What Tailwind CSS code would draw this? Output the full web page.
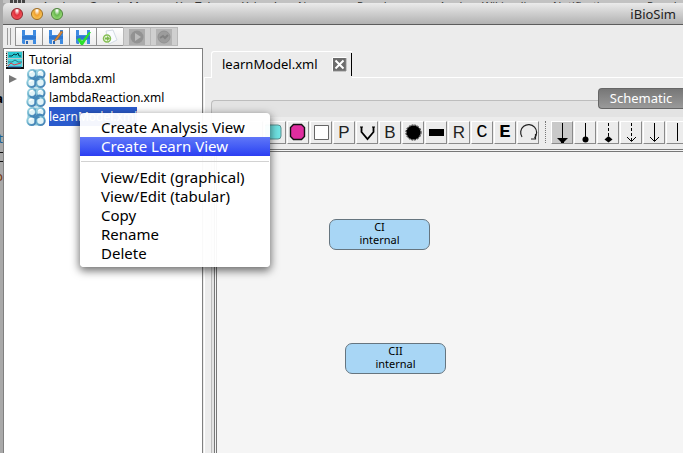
<!DOCTYPE html>
<html lang="en">
<head>
<meta charset="utf-8">
<title>iBioSim</title>
<script src="https://cdn.jsdelivr.net/npm/@tailwindcss/browser@4"></script>
</head>
<body class="h-screen overflow-hidden bg-[#a9a9a9] font-['Noto_Sans',sans-serif] text-black">
<svg class="absolute h-0 w-0">
  <defs>
    <linearGradient id="ball" x1="0" y1="0" x2="1" y2="1"><stop offset="0" stop-color="#a8dde8"/><stop offset=".5" stop-color="#62a9c8"/><stop offset="1" stop-color="#3d76b0"/></linearGradient>
    <symbol id="model" viewBox="0 0 20 19">
      <rect x="1.500" y=".5" width="17" height="18" rx="5" fill="#8cc6da"/>
      <g fill="#e2f4f8" stroke="url(#ball)" stroke-width="2">
        <circle cx="6" cy="5" r="4"/><circle cx="14.500" cy="5" r="4"/><circle cx="5.500" cy="13.800" r="4.200"/><circle cx="14.500" cy="13.800" r="4.200"/>
      </g>
      <path d="M4 8.500q4 3 7 0q3-2 6 .5M9.500 16q-1-6 4-6" fill="none" stroke="#4688b8" stroke-width="2"/>
      <path d="M4 4q1-2 3-1.500M12.500 4q1-2 3-1.500M3.500 13q1-2 3-1.500" fill="none" stroke="#fff" stroke-width="1.500"/>
    </symbol>
    <symbol id="floppy" viewBox="0 0 16 16">
      <path d="M1 1h14v14H2l-1-1z" fill="#3f8be0"/><path d="M4 1h8v5H4z" fill="#f2f7fd"/><path d="M1 7h14v3H1z" fill="#3078d0"/><path d="M4 11h8v4H4z" fill="#dfe3e8"/><path d="M5 12h2v3H5z" fill="#2a66b4"/>
    </symbol>
  </defs>
</svg>
<div class="relative flex h-full flex-col overflow-hidden pl-[3px]">
  <div aria-hidden="true" class="absolute top-0 left-0 h-full w-[3px] overflow-hidden text-right text-[13px] leading-5">
    <div class="flex h-full flex-col items-end pt-[88px]"><b>a</b><span class="mt-5 text-[#1c5d92]">t</span><span class="mt-1 h-[10px] w-full shrink-0 border-y border-[#111]"></span><span class="mt-1 text-[#7a3a10]">p</span></div>
  </div>
  <div class="relative h-[3px] shrink-0 overflow-hidden bg-[#c2c2c2] text-[11px] text-[#333]">
    <svg class="absolute top-0 left-[7px] h-[3px] w-[15px]" viewBox="0 0 15 3"><path d="M0 1.500h15" stroke="#444" stroke-width="3" stroke-dasharray="3 1"/></svg>
    <div class="absolute -top-[2px] left-[39px] flex leading-4 whitespace-nowrap"><span class="w-[47px]">Apple</span><span class="w-[87px]">Google Maps</span><span class="w-[66px]">YouTube</span><span class="w-[56px]">Yahoo!</span><span class="w-[59px]">News</span><span class="w-[82px]">Popular</span><span class="w-[43px]">Apple</span><span class="w-[71px]">Wikipedia</span><span class="w-[94px]">Notifications</span><span>Popular</span></div>
  </div>
  <header class="relative flex h-[22px] shrink-0 items-center gap-2 rounded-tl-[5px] border-b border-[#5c5c5c] bg-linear-to-b from-[#ebebeb] to-[#b2b2b2] pl-2">
    <button aria-label="Close" class="h-3 w-3 rounded-full border border-[#8d2228] bg-[radial-gradient(ellipse_at_50%_15%,#fff_5%,#e0303c_40%,#ff6a70_100%)]"></button>
    <button aria-label="Minimize" class="h-3 w-3 rounded-full border border-[#9c6a20] bg-[radial-gradient(ellipse_at_50%_15%,#fff_5%,#f0a030_40%,#ffe070_100%)]"></button>
    <button aria-label="Zoom" class="h-3 w-3 rounded-full border border-[#4a8038] bg-[radial-gradient(ellipse_at_50%_15%,#fff_5%,#68b850_40%,#b8f590_100%)]"></button>
    <h1 class="ml-auto pr-[7px] text-[13px] leading-5 text-[#222]">iBioSim</h1>
  </header>
  <div class="flex h-[23px] shrink-0 items-center bg-[#ececec] pl-1">
    <span class="mr-1 h-[17px] w-1 border-x border-[#9a9a9a]"></span>
    <button aria-label="Save" class="flex h-[19px] w-7 items-center justify-center border border-[#919191] bg-linear-to-b from-white to-[#ededed]"><svg class="h-4 w-4"><use href="#floppy"/></svg></button>
    <button aria-label="Save as" class="-ml-px flex h-[19px] w-7 items-center justify-center border border-[#919191] bg-linear-to-b from-white to-[#ededed]"><svg class="h-4 w-4" viewBox="0 0 16 16"><use href="#floppy"/><path d="M7 10L13 2l2 1-6 8-3 1z" fill="#d88a3a" stroke="#8a5525" stroke-width=".5"/></svg></button>
    <button aria-label="Save and check" class="-ml-px flex h-[19px] w-7 items-center justify-center border border-[#919191] bg-linear-to-b from-white to-[#ededed]"><svg class="h-4 w-4" viewBox="0 0 16 16"><use href="#floppy"/><path d="M2 10l3-1 2 3 7-9 2 0-8 13H6z" fill="#2be02b"/></svg></button>
    <button aria-label="Export" class="-ml-px flex h-[19px] w-7 items-center justify-center border border-[#919191] bg-linear-to-b from-white to-[#ededed]"><svg class="h-4 w-4" viewBox="0 0 16 16"><path d="M4 2l7-1 4 10-8 4z" fill="#fafcff" stroke="#d3dbe4"/><circle cx="5" cy="9.500" r="3.500" fill="#eef7e4" stroke="#86bf55" stroke-width="1.500"/><path d="M3 8.500h2V7l3 2.500L5 12v-1.500H3z" fill="#7cb84c"/></svg></button>
    <button aria-label="Run" disabled class="-ml-px flex h-[19px] w-7 items-center justify-center border border-[#b8b8b8] bg-[#cfcfcf]"><svg class="h-4 w-4" viewBox="0 0 16 16"><path d="M0 0h16v16H0z" fill="#ababab"/><circle cx="8" cy="8" r="6.500" fill="#929292"/><path d="M6 4l6 4-6 4z" fill="#bcbcbc"/></svg></button>
    <button aria-label="Stop" disabled class="-ml-px flex h-[19px] w-7 items-center justify-center border border-[#b8b8b8] bg-[#cfcfcf]"><svg class="h-4 w-4" viewBox="0 0 16 16"><path d="M0 0h16v16H0z" fill="#b3b3b3"/><circle cx="8" cy="8" r="6" fill="#9c9c9c" stroke="#929292"/><path d="M4 9l3-2 2 2 3-3" stroke="#828282" stroke-width="2" fill="none"/></svg></button>
  </div>
  <main class="flex min-h-0 flex-1 bg-[#ececec]">
    <nav class="w-[200px] shrink-0 border border-b-0 border-[#808080] bg-white pt-px text-[12px] leading-[19px]" aria-label="Project">
      <div class="flex items-center gap-1 pl-px">
        <svg class="h-[19px] w-[20px]" viewBox="0 0 20 19"><path d="M1 1h18v18H1z" fill="#111"/><path d="M1 1h17v16H1z" fill="#b8c8c8"/><path d="M3 2h14v6H3z" fill="#28c7d0"/><path d="M3 9h14v8H3z" fill="#4ed7e0"/><path d="M4 6h3l2-2 2 1 2-2 1 3h2" fill="none" stroke="#063c48"/><path d="M3 12h4l3-2 3 2h4" fill="none" stroke="#1a7c86"/><path d="M3 16l3-3 3 2 7-2" fill="none" stroke="#e03a4c"/><path d="M3 17h13" stroke="#2a50a0"/><path d="M1.500 3v13" stroke="#222" stroke-dasharray="1 1"/></svg>
        <span>Tutorial</span>
      </div>
      <div class="flex items-center pl-[5px]"><svg class="mr-[9px] h-2 w-2" viewBox="0 0 8 8"><path d="M0 0l8 4-8 4z" fill="#787878"/></svg><svg class="mr-[3px] h-[19px] w-[20px]"><use href="#model"/></svg><span>lambda.xml</span></div>
      <div class="flex items-center pl-[22px]"><svg class="mr-[3px] h-[19px] w-[20px]"><use href="#model"/></svg><span>lambdaReaction.xml</span></div>
      <div class="flex items-center pl-[22px]"><svg class="mr-[3px] h-[19px] w-[20px]"><use href="#model"/></svg><span class="bg-[#2a5bcd] text-white">learnModel.xml</span></div>
    </nav>
    <section class="flex min-w-0 flex-1 flex-col pl-px pt-[3px]">
      <div class="flex h-[27px] shrink-0">
        <span class="w-[7px] border-b border-white"></span>
        <div class="flex w-[141px] items-center justify-between rounded-tl-[3px] border-t border-l border-white pl-[10px]">
          <span class="pb-[2px] text-[13px] leading-5">learnModel.xml</span>
          <span class="flex h-full items-center gap-1">
            <button aria-label="Close tab" class="pb-[2px]"><svg class="h-[15px] w-[15px]" viewBox="0 0 15 15"><path d="M.5.5h14v14H.5z" fill="#6c6c6c" stroke="#fff"/><path d="M1 14h13V1" fill="none" stroke="#8a8a8a"/><path d="M3.500 3.500l8 8m0-8l-8 8" stroke="#fff" stroke-width="2"/></svg></button>
            <span class="mt-px h-[23px] w-px self-start bg-black"></span>
          </span>
        </div>
        <span class="flex-1 border-b border-white"></span>
      </div>
      <div class="flex min-h-0 flex-1 flex-col border-l border-white pt-[22px] pl-[6px]">
        <div class="relative flex min-h-0 flex-1 flex-col rounded-tl-[4px] border-t border-l border-[#bdbdbd] bg-[#e3e3e3] pt-[16px]">
          <button class="absolute -top-[13px] right-0 h-[21px] w-[85px] rounded-l-[4px] border border-r-0 border-[#666] bg-linear-to-b from-[#777] to-[#9a9a9a] text-[13px] leading-[17px] text-white">Schematic</button>
          <div class="flex h-[32px] shrink-0 items-start overflow-hidden bg-[#ececec] pt-1 pl-[6px] [&>button]:mr-px [&>button]:h-[23px] [&>button]:w-[22px] [&>button]:shrink-0 [&>button]:border [&>button]:border-t-white [&>button]:border-l-white [&>button]:border-r-[#8a8a8a] [&>button]:border-b-[#8a8a8a] [&_svg]:block [&_svg]:h-[21px] [&_svg]:w-[20px]">
            <button aria-label="Select"></button>
            <button aria-label="Add compartment"></button>
            <button aria-label="Add species"><svg viewBox="0 0 20 21"><rect x="-2" y="3" width="18" height="14" rx="3" fill="#70e4e4" stroke="#5a9090"/></svg></button>
            <button aria-label="Add reaction"><svg viewBox="0 0 20 21"><path d="M5.500 2.500h8l3 3v9l-3 3h-8l-3-3v-9z" fill="#df2d9f" stroke="#111" stroke-width="1.400"/></svg></button>
            <button aria-label="Add component"><svg viewBox="0 0 20 21"><path d="M3.500 3.500h14v14h-14z" fill="#fff" stroke="#666"/></svg></button>
            <button class="font-['Liberation_Sans',sans-serif] text-[17px] leading-[21px] text-[#222]">P</button>
            <button aria-label="Add variable"><svg viewBox="0 0 20 21"><path d="M4.500 5v5l6 7 6-7V5" fill="none" stroke="#000" stroke-width="1.800"/><path d="M3 5h3m9 0h3" stroke="#000"/></svg></button>
            <button class="font-['Liberation_Sans',sans-serif] text-[17px] leading-[21px] text-[#222]">B</button>
            <button aria-label="Add event"><svg viewBox="0 0 20 21"><circle cx="10.500" cy="10.500" r="7" fill="#000"/><circle cx="10.500" cy="10.500" r="7.500" fill="none" stroke="#000" stroke-dasharray="2 1"/></svg></button>
            <button aria-label="Add transition"><svg viewBox="0 0 20 21"><path d="M3 7h15v7H3z"/></svg></button>
            <button class="font-['Liberation_Sans',sans-serif] text-[17px] leading-[21px] text-[#222]">R</button>
            <button class="font-['Liberation_Mono',monospace] text-[19px] leading-[21px]">C</button>
            <button class="font-['Liberation_Mono',monospace] text-[19px] leading-[21px] font-bold">E</button>
            <button aria-label="Self influence"><svg viewBox="0 0 20 21"><path d="M4 15A8 8 0 1 1 16.500 16M13 17h4.500v-5" fill="none" stroke="#222" stroke-width="1.200"/></svg></button>
            <span class="mx-[5px] h-[22px] w-px shrink-0 border-l border-dotted border-[#777]"></span>
            <button aria-label="Activation" class="bg-[#c9c9c9]"><svg viewBox="0 0 20 21"><path d="M10.500 1v16" stroke="#000"/><path d="M5 16h11l-4 4v1H9v-1z"/></svg></button>
            <button aria-label="Repression"><svg viewBox="0 0 20 21"><path d="M10.500 1v15" stroke="#000"/><circle cx="10.500" cy="17.500" r="3"/></svg></button>
            <button aria-label="No influence"><svg viewBox="0 0 20 21"><path d="M10.500 1v14" stroke="#000" stroke-dasharray="3 2"/><path d="M10.500 14l4 3.500-4 3-4-3z"/></svg></button>
            <button aria-label="Complex formation"><svg viewBox="0 0 20 21"><path d="M10.500 1v18" stroke="#000" stroke-dasharray="3 2"/><path d="M6 15l4.500 4.500L15 15" fill="none" stroke="#000"/></svg></button>
            <button aria-label="Production"><svg viewBox="0 0 20 21"><path d="M10.500 1v18M6 15l4.500 4.500L15 15" fill="none" stroke="#000"/></svg></button>
            <button aria-label="Modifier"><svg viewBox="0 0 20 21"><path d="M10.500 1v18" stroke="#000"/></svg></button>
          </div>
          <div class="flex min-h-0 flex-1 flex-col pl-[2px]">
            <div class="min-h-0 flex-1 border-t-[3px] border-l-[3px] border-double border-[#777] bg-[#f5f5f5]">
              <div class="relative h-full text-center text-[11px] leading-[13px]">
                <div class="absolute top-[67px] left-[112px] h-[31px] w-[101px] rounded-[7px] border border-[#66757f] bg-[#a8d6f5]">CI<br>internal</div>
                <div class="absolute top-[191px] left-[128px] h-[31px] w-[101px] rounded-[7px] border border-[#66757f] bg-[#a8d6f5]">CII<br>internal</div>
              </div>
            </div>
          </div>
        </div>
      </div>
    </section>
  </main>
  <div role="menu" class="absolute top-[113px] left-[80px] flex w-[190px] flex-col rounded-[4px] bg-white/95 pt-[5px] pb-1 text-[15px] leading-[19px] shadow-[0_3px_9px_1px_rgba(0,0,0,0.55)] [&>button]:pl-[21px] [&>button]:text-left">
    <button role="menuitem">Create Analysis View</button>
    <button role="menuitem" class="bg-linear-to-b from-[#6076f8] to-[#2c3df2] text-white">Create Learn View</button>
    <hr class="mx-px mt-[5px] mb-[6px] border-[#d2d2d2]">
    <button role="menuitem">View/Edit (graphical)</button>
    <button role="menuitem">View/Edit (tabular)</button>
    <button role="menuitem">Copy</button>
    <button role="menuitem">Rename</button>
    <button role="menuitem">Delete</button>
  </div>
</div>
</body>
</html>
